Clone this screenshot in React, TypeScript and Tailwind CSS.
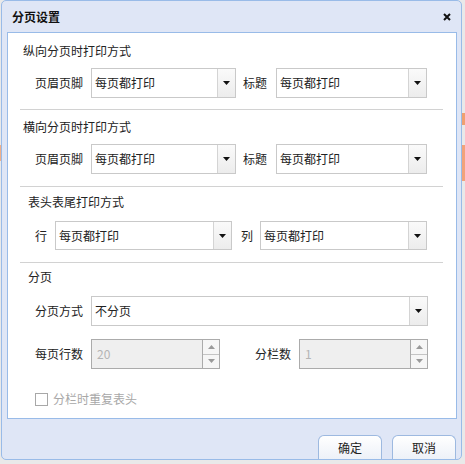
import React from "react";

const FONT = { fontFamily: '"Noto Sans CJK SC", "Noto Sans", sans-serif' };

function Caret() {
  return (
    <svg width="7" height="4" viewBox="0 0 7 4">
      <path d="M0 0 H7 L3.5 4 Z" fill="#111" />
    </svg>
  );
}

function Select({ w, h, value }: { w: string; h: string; value: string }) {
  return (
    <div className={`flex border border-[#c9c9c9] bg-white ${w} ${h}`}>
      <div className="flex flex-1 items-center pl-[3px] text-[12px] text-[#222]">{value}</div>
      <div className="flex w-[18px] items-center justify-center border-l border-[#d4d4d4] bg-gradient-to-b from-[#fafafa] to-[#ececec]">
        <Caret />
      </div>
    </div>
  );
}

function Spinner({ w, value }: { w: string; value: string }) {
  return (
    <div className={`flex h-[30px] border border-[#ababab] bg-[#efefef] ${w}`}>
      <div className="flex flex-1 items-center pl-[5px] text-[12px] text-[#b4b4b4]">{value}</div>
      <div className="flex w-[17px] flex-col border-l border-[#ababab]">
        <div className="flex flex-1 items-center justify-center border-b border-[#c4c4c4] bg-[#f6f6f6]">
          <svg width="7" height="4" viewBox="0 0 7 4">
            <path d="M0 4 H7 L3.5 0 Z" fill="#9a9a9a" />
          </svg>
        </div>
        <div className="flex flex-1 items-center justify-center bg-[#f6f6f6]">
          <svg width="7" height="4" viewBox="0 0 7 4">
            <path d="M0 0 H7 L3.5 4 Z" fill="#9a9a9a" />
          </svg>
        </div>
      </div>
    </div>
  );
}

function Divider({ mt }: { mt: string }) {
  return <div className={`ml-[12px] h-px w-[423px] bg-[#d2d2d2] ${mt}`} />;
}

export default function App() {
  return (
    <div className="relative h-[464px] w-[465px] overflow-hidden bg-[#e9e9e9]" style={FONT}>
      <div className="absolute left-[462px] top-[113px] h-[12px] w-[3px] bg-[#f0a070]" />
      <div className="absolute left-[462px] top-[145px] h-[36px] w-[3px] bg-[#f2a27a]" />
      <div className="absolute left-0 top-[145px] h-[16px] w-[1px] bg-[#f0b08a]" />
      <div className="relative ml-[1px] flex h-[460px] w-[461px] flex-col overflow-hidden rounded-[5px] border border-[#99bbe8] bg-[#dfe6f6]">
        <div className="flex h-[31px] items-center pl-[10px] pr-[10px]">
          <span className="text-[12px] font-bold text-[#111]">分页设置</span>
          <svg className="ml-auto" width="8" height="8" viewBox="0 0 8 8">
            <path d="M1 1 L7 7 M7 1 L1 7" stroke="#111" strokeWidth="2" />
          </svg>
        </div>
        <div className="ml-[5px] flex h-[387px] w-[450px] flex-col border border-[#99bbe8] bg-white text-[12px] text-[#222]">
          {/* Section 1 */}
          <div className="mt-[9px] flex h-[18px] items-center pl-[15px]">纵向分页时打印方式</div>
          <div className="mt-[8px] flex items-center pl-[27px]">
            <span className="w-[48px]">页眉页脚</span>
            <div className="ml-[8px]">
              <Select w="w-[145px]" h="h-[30px]" value="每页都打印" />
            </div>
            <span className="ml-[7px] w-[24px]">标题</span>
            <div className="ml-[9px]">
              <Select w="w-[151px]" h="h-[30px]" value="每页都打印" />
            </div>
          </div>
          <Divider mt="mt-[11px]" />
          {/* Section 2 */}
          <div className="mt-[8px] flex h-[18px] items-center pl-[15px]">横向分页时打印方式</div>
          <div className="mt-[8px] flex items-center pl-[27px]">
            <span className="w-[48px]">页眉页脚</span>
            <div className="ml-[8px]">
              <Select w="w-[145px]" h="h-[30px]" value="每页都打印" />
            </div>
            <span className="ml-[7px] w-[24px]">标题</span>
            <div className="ml-[9px]">
              <Select w="w-[151px]" h="h-[30px]" value="每页都打印" />
            </div>
          </div>
          <Divider mt="mt-[12px]" />
          {/* Section 3 */}
          <div className="mt-[6px] flex h-[18px] items-center pl-[20px]">表头表尾打印方式</div>
          <div className="mt-[10px] flex items-center pl-[27px]">
            <span className="w-[12px]">行</span>
            <div className="ml-[8px]">
              <Select w="w-[177px]" h="h-[29px]" value="每页都打印" />
            </div>
            <span className="ml-[9px] w-[12px]">列</span>
            <div className="ml-[7px]">
              <Select w="w-[167px]" h="h-[29px]" value="每页都打印" />
            </div>
          </div>
          <Divider mt="mt-[12px]" />
          {/* Section 4 */}
          <div className="mt-[5px] flex h-[18px] items-center pl-[20px]">分页</div>
          <div className="mt-[10px] flex items-center pl-[27px]">
            <span className="w-[48px]">分页方式</span>
            <div className="ml-[8px]">
              <Select w="w-[337px]" h="h-[30px]" value="不分页" />
            </div>
          </div>
          <div className="mt-[13px] flex items-center pl-[27px]">
            <span className="w-[48px]">每页行数</span>
            <div className="ml-[8px]">
              <Spinner w="w-[129px]" value="20" />
            </div>
            <span className="ml-[35px] w-[36px]">分栏数</span>
            <div className="ml-[8px]">
              <Spinner w="w-[129px]" value="1" />
            </div>
          </div>
          <div className="mt-[21px] flex items-center pl-[27px]">
            <div className="h-[13px] w-[13px] border border-[#a8a8a8] bg-white" />
            <span className="ml-[5px] text-[#a8a8a8]">分栏时重复表头</span>
          </div>
        </div>
        <div className="flex flex-1 items-end pl-[316px]">
          <div className="flex h-[24px] w-[64px] items-center justify-center rounded-t-[6px] border border-b-0 border-[#9db9e0] bg-gradient-to-b from-white to-[#edf1f8] text-[12px] text-[#222]">
            确定
          </div>
          <div className="ml-[10px] flex h-[24px] w-[64px] items-center justify-center rounded-t-[6px] border border-b-0 border-[#9db9e0] bg-gradient-to-b from-white to-[#edf1f8] text-[12px] text-[#222]">
            取消
          </div>
        </div>
      </div>
    </div>
  );
}
